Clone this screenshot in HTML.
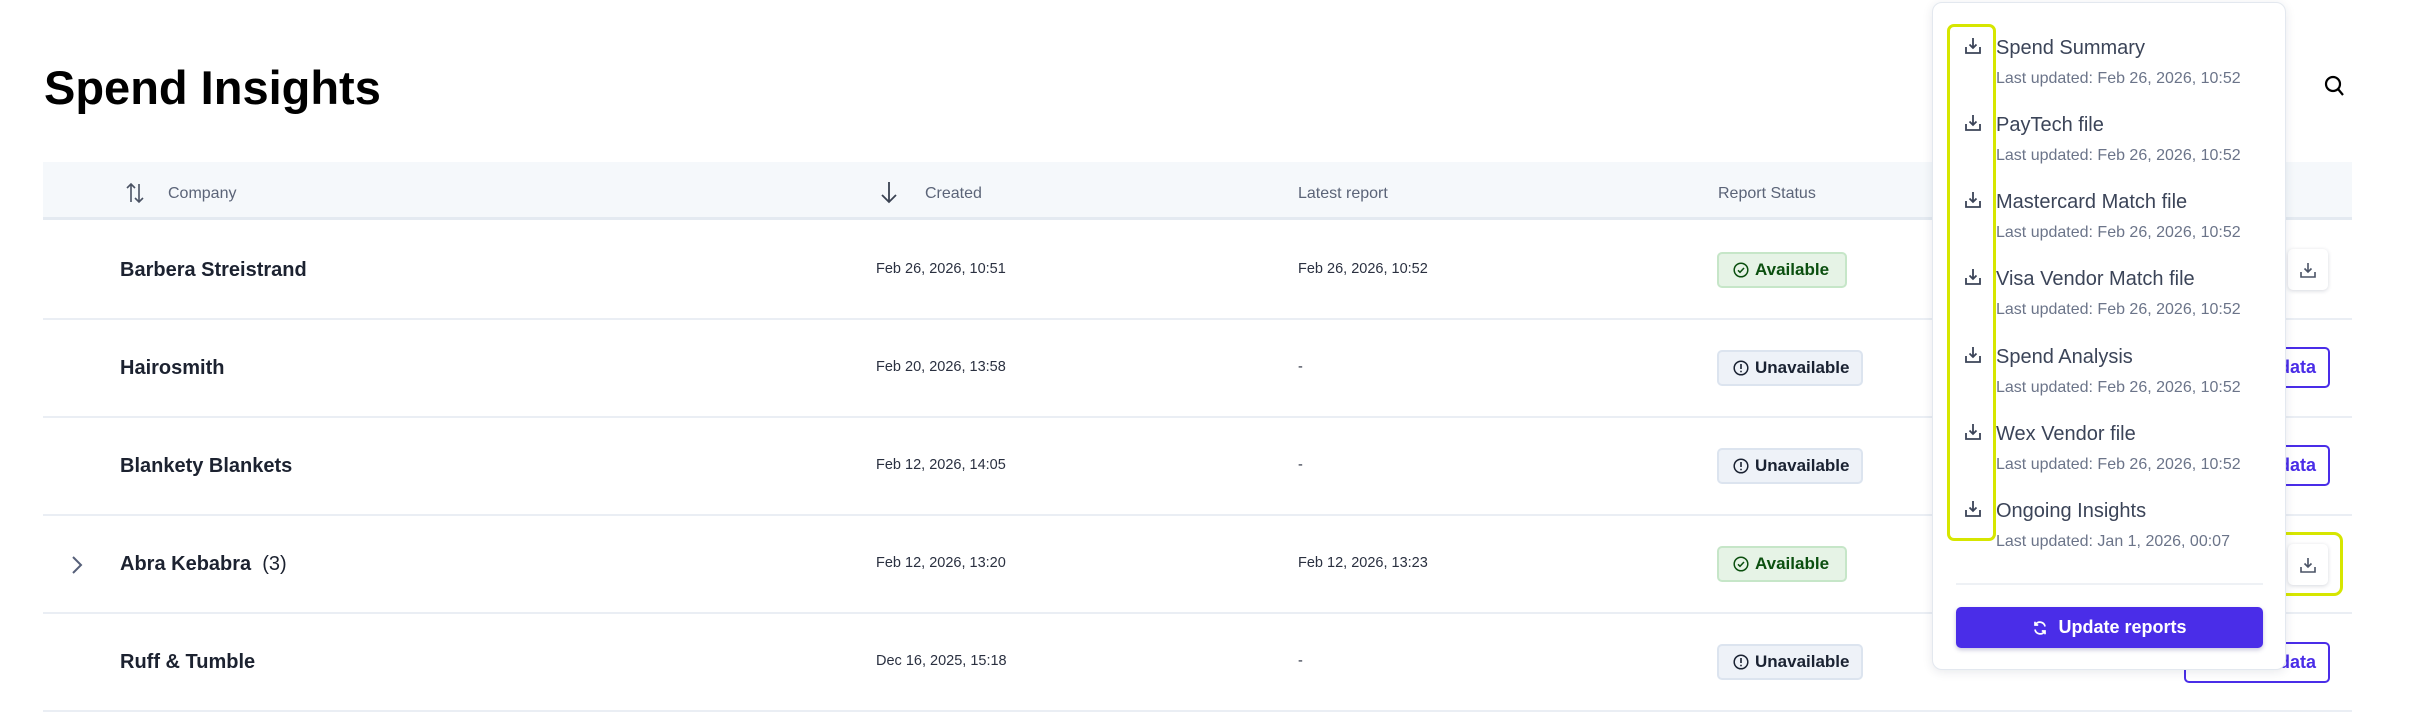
<!DOCTYPE html>
<html><head><meta charset="utf-8">
<style>
*{box-sizing:border-box;margin:0;padding:0}
body{width:2420px;height:715px;overflow:hidden;background:#fff;font-family:"Liberation Sans",sans-serif;position:relative;color:#1a2030}
.abs{position:absolute}
h1{position:absolute;left:44px;top:61px;font-size:47px;font-weight:700;color:#000;letter-spacing:0;line-height:54px}
.hdr{position:absolute;left:43px;top:162px;width:2309px;height:58px;background:#f5f8fb;border-bottom:3px solid #e4eaf1}
.ht{position:absolute;top:184px;font-size:16px;color:#5b6478;line-height:20px}
.rowline{position:absolute;left:43px;width:2309px;height:2px;background:#eaeef4}
.name{position:absolute;left:120px;font-size:20px;font-weight:700;color:#1c2230;line-height:24px}
.date{position:absolute;font-size:14.5px;color:#2a3040;line-height:17px}
.badge{position:absolute;left:1717px;height:36px;border-radius:5px;font-size:17px;font-weight:700;display:flex;align-items:center;padding-left:14px;gap:6px}
.av{width:130px;background:#e6f3e6;border:2px solid #c6e6c8;color:#0b4f0f}
.un{width:146px;background:#eef2f8;border:2px solid #dce4ef;color:#1a2232}
.dl{position:absolute;left:2288px;width:40px;height:41px;border-radius:5px;background:#fff;box-shadow:0 1px 4px rgba(30,40,70,.18);display:flex;align-items:center;justify-content:center}
.ob{position:absolute;left:2184px;width:146px;height:41px;border:2px solid #4a2de8;border-radius:5px;color:#4a2de8;font-weight:700;font-size:18px;display:flex;align-items:center;justify-content:flex-end;padding-right:12px}
.pop{position:absolute;left:1932px;top:2px;width:354px;height:668px;background:#fff;border:1px solid #e3e8ef;border-radius:10px;box-shadow:0 2px 10px rgba(30,40,70,.10)}
.it{position:absolute;left:1996px;font-size:20px;color:#3b4458;line-height:24px}
.sub{position:absolute;left:1996px;font-size:16px;color:#6b7489;line-height:20px}
.ic{position:absolute;left:1964px}
</style></head><body>
<h1>Spend Insights</h1>
<svg class="abs" style="left:2324px;top:75px" width="20" height="22" viewBox="0 0 20 22"><circle cx="9" cy="9" r="7" fill="none" stroke="#000" stroke-width="2.2"/><path d="M14 14l5 6" stroke="#000" stroke-width="2.2"/></svg>

<div class="hdr"></div>
<svg class="abs" style="left:126px;top:182px" width="18" height="22" viewBox="0 0 18 22"><path d="M5 20V2M1 6l4-4 4 4M13 2v18M9 16l4 4 4-4" fill="none" stroke="#4a5263" stroke-width="1.6"/></svg>
<div class="ht" style="left:168px">Company</div>
<svg class="abs" style="left:880px;top:180px" width="18" height="24" viewBox="0 0 18 24"><path d="M9 2v20M2 15l7 7 7-7" fill="none" stroke="#3a4252" stroke-width="1.8"/></svg>
<div class="ht" style="left:925px">Created</div>
<div class="ht" style="left:1298px">Latest report</div>
<div class="ht" style="left:1718px">Report Status</div>

<div class="rowline" style="top:318px"></div>
<div class="rowline" style="top:416px"></div>
<div class="rowline" style="top:514px"></div>
<div class="rowline" style="top:612px"></div>
<div class="rowline" style="top:710px"></div>

<div class="name" style="top:258px">Barbera Streistrand</div>
<div class="name" style="top:356px">Hairosmith</div>
<div class="name" style="top:454px">Blankety Blankets</div>
<div class="name" style="top:552px">Abra Kebabra&nbsp; <span style="font-weight:400">(3)</span></div>
<div class="name" style="top:650px">Ruff &amp; Tumble</div>
<svg class="abs" style="left:70px;top:555px" width="14" height="20" viewBox="0 0 14 20"><path d="M3 2l8 8-8 8" fill="none" stroke="#566079" stroke-width="2"/></svg>

<div class="date" style="left:876px;top:261px">Feb 26, 2026, 10:51</div>
<div class="date" style="left:876px;top:359px">Feb 20, 2026, 13:58</div>
<div class="date" style="left:876px;top:457px">Feb 12, 2026, 14:05</div>
<div class="date" style="left:876px;top:555px">Feb 12, 2026, 13:20</div>
<div class="date" style="left:876px;top:653px">Dec 16, 2025, 15:18</div>
<div class="date" style="left:1298px;top:261px">Feb 26, 2026, 10:52</div>
<div class="date" style="left:1298px;top:359px">-</div>
<div class="date" style="left:1298px;top:457px">-</div>
<div class="date" style="left:1298px;top:555px">Feb 12, 2026, 13:23</div>
<div class="date" style="left:1298px;top:653px">-</div>

<div class="badge av" style="top:252px"><svg width="16" height="16" viewBox="0 0 16 16"><circle cx="8" cy="8" r="6.8" fill="none" stroke="#0b4f0f" stroke-width="1.5"/><path d="M5 8.3l2 2 4-4.3" fill="none" stroke="#0b4f0f" stroke-width="1.5"/></svg>Available</div>
<div class="badge un" style="top:350px"><svg width="16" height="16" viewBox="0 0 16 16"><circle cx="8" cy="8" r="6.8" fill="none" stroke="#1a2232" stroke-width="1.5"/><path d="M8 4v5M8 10.8v1.4" stroke="#1a2232" stroke-width="1.6"/></svg>Unavailable</div>
<div class="badge un" style="top:448px"><svg width="16" height="16" viewBox="0 0 16 16"><circle cx="8" cy="8" r="6.8" fill="none" stroke="#1a2232" stroke-width="1.5"/><path d="M8 4v5M8 10.8v1.4" stroke="#1a2232" stroke-width="1.6"/></svg>Unavailable</div>
<div class="badge av" style="top:546px"><svg width="16" height="16" viewBox="0 0 16 16"><circle cx="8" cy="8" r="6.8" fill="none" stroke="#0b4f0f" stroke-width="1.5"/><path d="M5 8.3l2 2 4-4.3" fill="none" stroke="#0b4f0f" stroke-width="1.5"/></svg>Available</div>
<div class="badge un" style="top:644px"><svg width="16" height="16" viewBox="0 0 16 16"><circle cx="8" cy="8" r="6.8" fill="none" stroke="#1a2232" stroke-width="1.5"/><path d="M8 4v5M8 10.8v1.4" stroke="#1a2232" stroke-width="1.6"/></svg>Unavailable</div>

<div class="dl" style="top:249px"><svg width="18" height="18" viewBox="0 0 18 18"><path d="M9 2v9M5.5 7.5L9 11l3.5-3.5M2 11v5h14v-5" fill="none" stroke="#4a5366" stroke-width="1.6"/></svg></div>
<div class="dl" style="top:544px"><svg width="18" height="18" viewBox="0 0 18 18"><path d="M9 2v9M5.5 7.5L9 11l3.5-3.5M2 11v5h14v-5" fill="none" stroke="#4a5366" stroke-width="1.6"/></svg></div>
<div class="abs" style="left:2275px;top:532px;width:68px;height:64px;border:3px solid #d6e600;border-radius:9px"></div>
<div class="ob" style="top:347px">Get data</div>
<div class="ob" style="top:445px">Get data</div>
<div class="ob" style="top:642px">Get data</div>

<div class="pop"></div>
<div class="abs" style="left:1947px;top:24px;width:49px;height:517px;border:3px solid #d6e600;border-radius:7px"></div>

<div class="it" style="top:36px">Spend Summary</div><div class="sub" style="top:69px">Last updated: Feb 26, 2026, 10:52</div>
<div class="it" style="top:113px">PayTech file</div><div class="sub" style="top:146px">Last updated: Feb 26, 2026, 10:52</div>
<div class="it" style="top:190px">Mastercard Match file</div><div class="sub" style="top:223px">Last updated: Feb 26, 2026, 10:52</div>
<div class="it" style="top:267px">Visa Vendor Match file</div><div class="sub" style="top:300px">Last updated: Feb 26, 2026, 10:52</div>
<div class="it" style="top:345px">Spend Analysis</div><div class="sub" style="top:378px">Last updated: Feb 26, 2026, 10:52</div>
<div class="it" style="top:422px">Wex Vendor file</div><div class="sub" style="top:455px">Last updated: Feb 26, 2026, 10:52</div>
<div class="it" style="top:499px">Ongoing Insights</div><div class="sub" style="top:532px">Last updated: Jan 1, 2026, 00:07</div>

<svg class="ic" style="top:37px" width="18" height="18" viewBox="0 0 18 18"><path d="M9 1v10M5.5 7.5L9 11l3.5-3.5M2 10v6h14v-6" fill="none" stroke="#3b4458" stroke-width="1.8"/></svg>
<svg class="ic" style="top:114px" width="18" height="18" viewBox="0 0 18 18"><path d="M9 1v10M5.5 7.5L9 11l3.5-3.5M2 10v6h14v-6" fill="none" stroke="#3b4458" stroke-width="1.8"/></svg>
<svg class="ic" style="top:191px" width="18" height="18" viewBox="0 0 18 18"><path d="M9 1v10M5.5 7.5L9 11l3.5-3.5M2 10v6h14v-6" fill="none" stroke="#3b4458" stroke-width="1.8"/></svg>
<svg class="ic" style="top:268px" width="18" height="18" viewBox="0 0 18 18"><path d="M9 1v10M5.5 7.5L9 11l3.5-3.5M2 10v6h14v-6" fill="none" stroke="#3b4458" stroke-width="1.8"/></svg>
<svg class="ic" style="top:346px" width="18" height="18" viewBox="0 0 18 18"><path d="M9 1v10M5.5 7.5L9 11l3.5-3.5M2 10v6h14v-6" fill="none" stroke="#3b4458" stroke-width="1.8"/></svg>
<svg class="ic" style="top:423px" width="18" height="18" viewBox="0 0 18 18"><path d="M9 1v10M5.5 7.5L9 11l3.5-3.5M2 10v6h14v-6" fill="none" stroke="#3b4458" stroke-width="1.8"/></svg>
<svg class="ic" style="top:500px" width="18" height="18" viewBox="0 0 18 18"><path d="M9 1v10M5.5 7.5L9 11l3.5-3.5M2 10v6h14v-6" fill="none" stroke="#3b4458" stroke-width="1.8"/></svg>

<div class="abs" style="left:1956px;top:583px;width:307px;height:2px;background:#eef1f5"></div>
<div class="abs" style="left:1956px;top:607px;width:307px;height:41px;background:#4a2de8;border-radius:5px;box-shadow:0 2px 4px rgba(40,30,120,.25);color:#fff;font-weight:700;font-size:18px;display:flex;align-items:center;justify-content:center;gap:10px"><svg width="16" height="16" viewBox="0 0 16 16"><path d="M13 6.5A5.2 5.2 0 0 0 3.5 4.5M3 9.5a5.2 5.2 0 0 0 9.5 2" fill="none" stroke="#fff" stroke-width="1.7"/><path d="M3 1.8v3.2h3.2M13 14.2V11H9.8" fill="none" stroke="#fff" stroke-width="1.7"/></svg>Update reports</div>
</body></html>
